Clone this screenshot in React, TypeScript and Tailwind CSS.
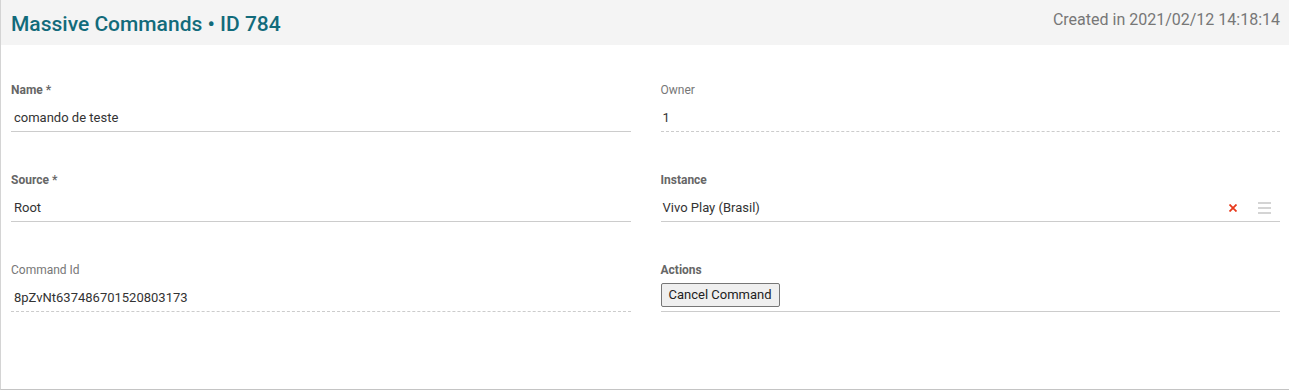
const font = { fontFamily: "Roboto, 'Liberation Sans', sans-serif" };

type FieldProps = {
  label: string;
  bold?: boolean;
  readOnly?: boolean;
  children: React.ReactNode;
};

function Field({ label, bold, readOnly, children }: FieldProps) {
  return (
    <div className="flex flex-col">
      <div
        className={`h-[14px] text-[12px] leading-[14px] ${
          bold ? "font-bold text-[#666]" : "text-[#777]"
        }`}
      >
        {label}
      </div>
      <div
        className={`mt-[8px] h-[27px] flex items-center border-b text-[13px] text-[#333] ${
          readOnly ? "border-dashed border-[#ccc]" : "border-solid border-[#ccc]"
        }`}
      >
        {children}
      </div>
    </div>
  );
}

export default function App() {
  return (
    <div className="w-[1289px] h-[391px] bg-white" style={font}>
      <div className="h-[390px] border-l border-b border-[#d4d4d4] border-b-[#c4c4c4]">
        <div className="h-[45px] bg-[#f4f4f4] flex items-center justify-between pl-[10px] pr-[9px]">
          <h1 className="text-[21px] font-medium text-[#126b7b] mt-[4px]">
            Massive Commands • ID 784
          </h1>
          <span className="text-[16px] text-[#777] -mt-[6px]">Created in 2021/02/12 14:18:14</span>
        </div>

        <div className="grid grid-cols-2 gap-x-[30px] gap-y-[41px] pt-[38px] pl-[10px] pr-[9px]">
          <Field label="Name *" bold>
            <span className="pl-[3px]">comando de teste</span>
          </Field>
          <Field label="Owner" readOnly>
            <span className="pl-[2px]">1</span>
          </Field>

          <Field label="Source *" bold>
            <span className="pl-[3px]">Root</span>
          </Field>
          <Field label="Instance" bold>
            <div className="flex w-full items-center">
              <span className="pl-[2px] flex-1">Vivo Play (Brasil)</span>
              <svg width="8" height="8" viewBox="0 0 8 8" className="mr-[21px]">
                <path d="M0.5 0.5 L7.5 7.5 M7.5 0.5 L0.5 7.5" stroke="#e8391b" strokeWidth="1.8" />
              </svg>
              <svg width="13" height="12" viewBox="0 0 13 12" className="mr-[9px]">
                <path d="M0 1 H13 M0 6 H13 M0 11 H13" stroke="#aaa" strokeWidth="1.2" />
              </svg>
            </div>
          </Field>

          <Field label="Command Id" readOnly>
            <span className="pl-[3px]">8pZvNt637486701520803173</span>
          </Field>
          <Field label="Actions" bold>
            <button className="h-[24px] px-[7px] -mt-[7px] text-[13px] text-[#222] bg-[#efefef] border border-[#767676] rounded-[2px]">
              Cancel Command
            </button>
          </Field>
        </div>
      </div>
    </div>
  );
}
